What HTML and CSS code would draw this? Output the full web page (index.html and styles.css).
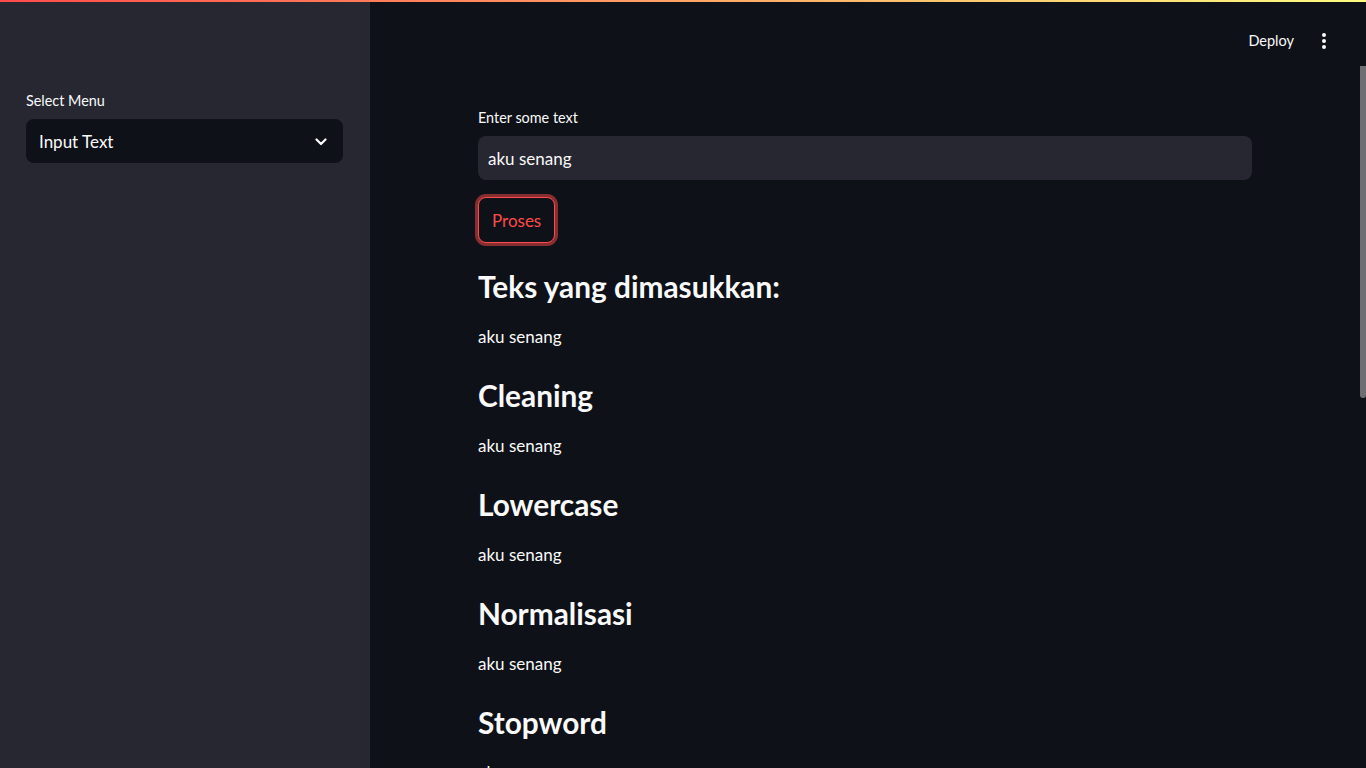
FILE: index.html
```html
<!DOCTYPE html>
<html lang="id">
<head>
<meta charset="utf-8">
<title>App</title>
<link rel="stylesheet" href="styles.css">
</head>
<body>
<div class="decoration"></div>
<div class="app">
  <aside class="sidebar">
    <label class="label">Select Menu</label>
    <div class="select">
      <span>Input Text</span>
      <svg class="chevron" width="12" height="8" viewBox="0 0 12 8"><polyline points="1.5,1.5 6,6 10.5,1.5" fill="none" stroke="#fafafa" stroke-width="2.2" stroke-linecap="round" stroke-linejoin="round"/></svg>
    </div>
  </aside>
  <main class="main">
    <header class="header">
      <span class="deploy">Deploy</span>
      <svg class="kebab" width="6" height="18" viewBox="0 0 6 18"><circle cx="3" cy="3" r="2" fill="#fafafa"/><circle cx="3" cy="9" r="2" fill="#fafafa"/><circle cx="3" cy="15" r="2" fill="#fafafa"/></svg>
    </header>
    <div class="content">
      <label class="label">Enter some text</label>
      <div class="input">aku senang</div>
      <div class="btn-row"><button class="btn">Proses</button></div>
      <section class="section first">
        <h3>Teks yang dimasukkan:</h3>
        <p>aku senang</p>
      </section>
      <section class="section">
        <h3>Cleaning</h3>
        <p>aku senang</p>
      </section>
      <section class="section">
        <h3>Lowercase</h3>
        <p>aku senang</p>
      </section>
      <section class="section">
        <h3>Normalisasi</h3>
        <p>aku senang</p>
      </section>
      <section class="section">
        <h3>Stopword</h3>
        <p>aku senang</p>
      </section>
    </div>
    <div class="scrollbar"></div>
  </main>
</div>
</body>
</html>
```

FILE: styles.css
```css
* { box-sizing: border-box; }
html, body {
  margin: 0;
  padding: 0;
  height: 100%;
  overflow: hidden;
}
body {
  background: #0e1117;
  color: #fafafa;
  font-family: "Lato", "Liberation Sans", sans-serif;
}
.decoration {
  position: absolute;
  top: 0;
  left: 0;
  right: 0;
  height: 2px;
  background: linear-gradient(90deg, #ff4b4b, #fffd80);
  z-index: 10;
}
.app {
  display: flex;
  height: 768px;
}
.sidebar {
  width: 370px;
  flex: none;
  background: #262730;
  padding: 91px 27px 0 26px;
  display: flex;
  flex-direction: column;
}
.label {
  font-size: 14.4px;
  line-height: 20px;
  display: block;
}
.select {
  margin-top: 8px;
  height: 44px;
  background: #0e1117;
  border-radius: 8px;
  display: flex;
  align-items: center;
  justify-content: space-between;
  padding: 0 16px 0 13px;
  font-size: 17px;
}
.chevron { display: block; margin-top: 1px; }
.main {
  flex: 1;
  position: relative;
  display: flex;
  flex-direction: column;
  overflow: hidden;
}
.header {
  flex: none;
  height: 80px;
  display: flex;
  align-items: center;
  justify-content: flex-end;
  padding: 0 39px 0 0;
  gap: 27px;
}
.deploy {
  font-size: 14.5px;
}
.kebab { display: block; margin-top: 1px; }
.content {
  flex: none;
  width: 774px;
  margin-left: 108px;
  padding-top: 28px;
  display: flex;
  flex-direction: column;
}
.input {
  margin-top: 8px;
  height: 44px;
  background: #262730;
  border-radius: 8px;
  padding: 0 10px;
  display: flex;
  align-items: center;
  font-size: 17px;
}
.btn-row {
  margin-top: 17px;
  display: flex;
}
.btn {
  height: 46px;
  padding: 0 13px;
  background: #0e1117;
  color: #ff4b4b;
  border: 1px solid #ff4b4b;
  border-radius: 8px;
  box-shadow: 0 0 0 3px rgba(255, 75, 75, 0.5);
  font-family: inherit;
  font-size: 17px;
}
.section h3 {
  margin: 0;
  font-size: 29.8px;
  line-height: 34px;
  font-weight: 700;
}
.section p {
  margin: 21px 0 0;
  font-size: 17px;
  line-height: 24px;
}
.section { margin-top: 30px; }
.section.first { margin-top: 27px; }
.scrollbar {
  position: absolute;
  right: 0;
  top: 66px;
  width: 6px;
  height: 332px;
  background: #6f6f73;
  border-radius: 0 0 3px 3px;
}
```
